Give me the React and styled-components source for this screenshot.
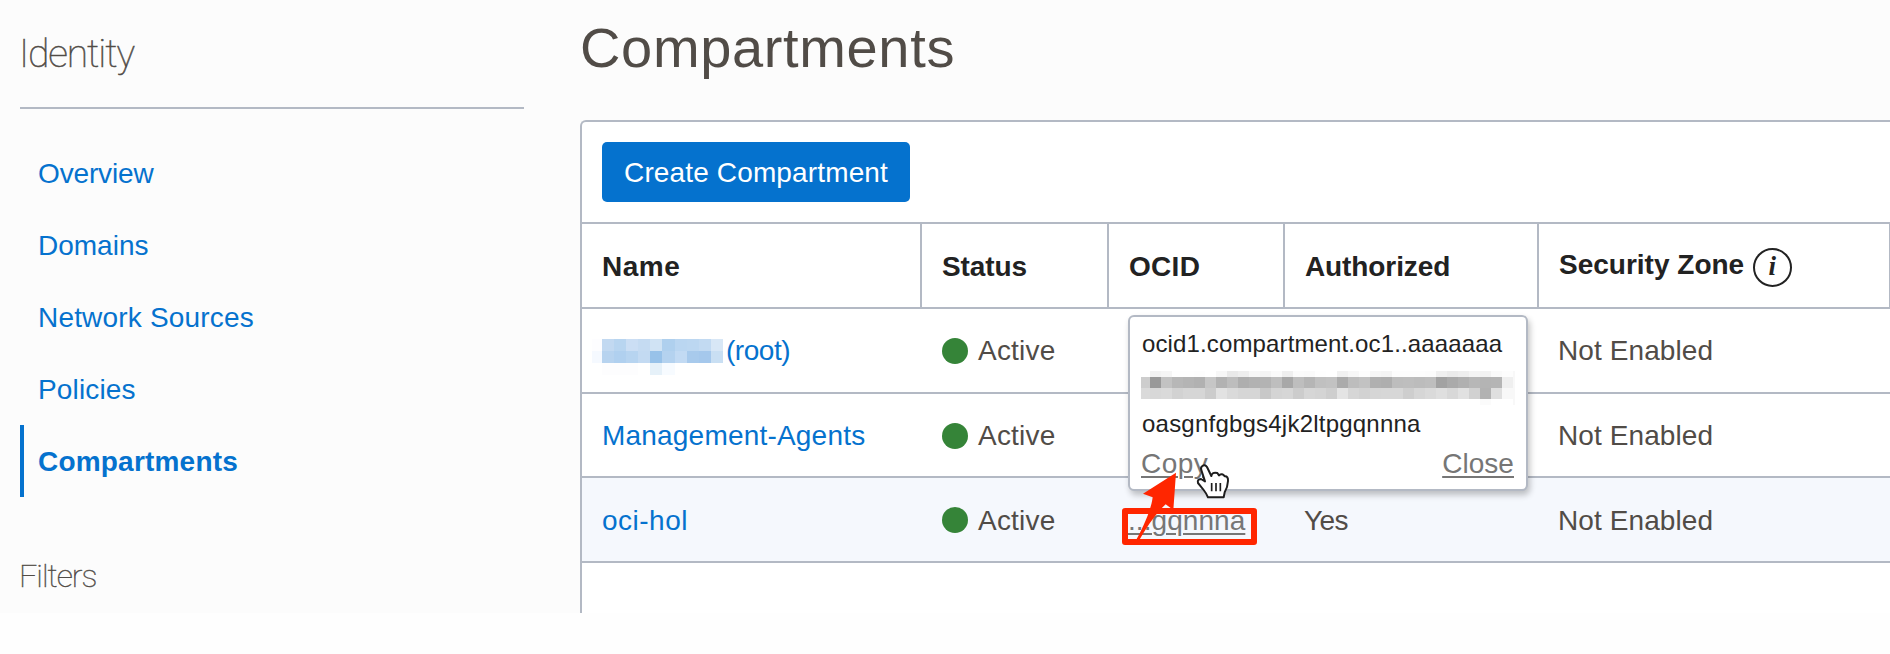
import React from 'react';
import styled, { createGlobalStyle } from 'styled-components';

const colors = {
  link: '#0572ce',
  text: '#514c47',
  heading: '#222222',
  muted: '#767676',
  line: '#b3b9c4',
  alert: '#ff2600',
};

const GlobalStyle = createGlobalStyle`
  body {
    margin: 0;
    background: #fefefe;
    color: ${colors.text};
    font-family: "Liberation Sans", Arial, sans-serif;
    font-size: 28px;
    overflow: hidden;
  }
  * { box-sizing: border-box; }
`;

const Frame = styled.div`
  display: grid;
  grid-template-columns: 580px 1fr;
  width: 1890px;
  height: 613px;
  background: #fcfcfc;
  overflow: hidden;
`;

/* ---------- Sidebar ---------- */

const Sidebar = styled.aside`
  padding: 0 56px 0 20px;
`;

const SidebarTitle = styled.h2`
  margin: 0;
  height: 109px;
  padding-top: 29px;
  border-bottom: 2px solid ${colors.line};
  font: 100 39px/50px Roboto, sans-serif;
  letter-spacing: -1.1px;
  text-indent: -1px;
  -webkit-text-stroke: 0.5px ${colors.text};
`;

const Nav = styled.nav`
  display: flex;
  flex-direction: column;
  padding-top: 28px;
`;

const NavItem = styled.a`
  height: 72px;
  padding-left: 14px;
  border-left: 4px solid ${(p) => (p.$active ? colors.link : 'transparent')};
  color: ${colors.link};
  font-weight: ${(p) => (p.$active ? 700 : 400)};
  letter-spacing: ${(p) => p.$tracking}px;
  line-height: 73px;
`;

const FiltersTitle = styled.h3`
  margin: 0;
  padding-top: 54px;
  font: 100 32px/50px Roboto, sans-serif;
  letter-spacing: -1px;
  text-indent: -1px;
  -webkit-text-stroke: 0.4px ${colors.text};
`;

/* ---------- Main column ---------- */

const Main = styled.main`
  min-width: 0;
`;

const PageTitle = styled.h1`
  margin: 0;
  height: 120px;
  padding-top: 16px;
  font-size: 56px;
  font-weight: 400;
  line-height: 64px;
  letter-spacing: 0.65px;
`;

const Panel = styled.section`
  height: 520px;
  border: 2px solid ${colors.line};
  border-right: 0;
  border-top-left-radius: 6px;
  background: #fff;
`;

const Toolbar = styled.div`
  height: 100px;
  padding: 20px;
`;

const PrimaryButton = styled.button`
  display: block;
  width: 308px;
  height: 60px;
  padding: 1px 0 0;
  border: 0;
  border-radius: 5px;
  background: ${colors.link};
  color: #fff;
  font: inherit;
  letter-spacing: 0.14px;
`;

const columns = '340px 187px 176px 254px 1fr';

const HeaderRow = styled.div`
  display: grid;
  grid-template-columns: ${columns};
  grid-template-rows: 83px;
  height: 87px;
  border-top: 2px solid ${colors.line};
  border-bottom: 2px solid ${colors.line};
`;

const HeaderCell = styled.div`
  padding: 2px 0 0 20px;
  border-right: ${(p) => (p.$last ? 1 : 2)}px solid ${colors.line};
  color: ${colors.heading};
  font-weight: 700;
  line-height: 81px;
  letter-spacing: ${(p) => p.$tracking || 0}px;
`;

const InfoHeaderCell = styled(HeaderCell)`
  display: flex;
  padding-top: 0;
`;

const InfoIcon = styled.span`
  width: 39px;
  height: 39px;
  margin: 24px 0 0 8.5px;
  border: 2px solid ${colors.heading};
  border-radius: 50%;
  font: italic 700 27px/33px "Liberation Serif", serif;
  text-align: center;
`;

const Row = styled.div`
  display: grid;
  grid-template-columns: ${columns};
  height: ${(p) => p.$height}px;
  border-bottom: 2px solid ${colors.line};
  background: ${(p) => (p.$selected ? '#f5f8fd' : '#fff')};
  line-height: ${(p) => (p.$selected ? 85 : 83)}px;
`;

const Cell = styled.div`
  display: flex;
  padding-left: ${(p) => (p.$flush ? 19 : 20)}px;
  letter-spacing: ${(p) => p.$tracking || 0}px;
  white-space: nowrap;
`;

const OcidCell = styled(Cell)`
  position: relative;
`;

const NameLink = styled.a`
  color: ${colors.link};
  letter-spacing: ${(p) => p.$tracking}px;
`;

const StatusDot = styled.span`
  width: 26px;
  height: 26px;
  margin: 29px 10px 0 0;
  border-radius: 50%;
  background: #358438;
`;

const TextLink = styled.a`
  color: ${colors.muted};
  letter-spacing: ${(p) => p.$tracking}px;
  text-decoration: underline;
  text-decoration-thickness: 2px;
  text-underline-offset: 3px;
`;

const OcidLink = styled(TextLink)`
  margin-left: -1px;
`;

/* ---------- Redacted text ---------- */

const MosaicGrid = styled.span`
  display: grid;
  grid-template-columns: ${(p) => p.$cols};
  grid-template-rows: ${(p) => p.$rows};
`;

const NameMosaic = styled(MosaicGrid)`
  margin: 24px 3px 0 -10px;
  align-self: flex-start;
`;

const OcidMosaic = styled(MosaicGrid)`
  height: 40px;
  padding-top: 7px;
`;

const Tile = styled.i`
  background: ${(p) => p.$fill};
`;

/* ---------- OCID popover ---------- */

const Popover = styled.div`
  position: absolute;
  z-index: 1;
  top: -163px;
  left: 19px;
  width: 400px;
  height: 176px;
  padding: 7px 11px 0;
  border: 2px solid ${colors.line};
  border-radius: 6px;
  background: #fff;
  box-shadow: 2px 4px 6px rgba(0, 0, 0, 0.24);
  line-height: 40px;
`;

const OcidLine = styled.div`
  height: 40px;
  padding-left: 1px;
  color: ${colors.heading};
  font-size: 24px;
  letter-spacing: ${(p) => p.$tracking}px;
`;

const PopoverActions = styled.div`
  display: flex;
  justify-content: space-between;
  padding-right: 1px;
`;

/* ---------- Callouts ---------- */

const Highlight = styled.span`
  position: absolute;
  z-index: 2;
  top: 30px;
  left: 13px;
  width: 135px;
  height: 37px;
  border: 6px solid ${colors.alert};
  border-radius: 3px;
`;

const Annotation = styled.svg`
  position: absolute;
  z-index: 3;
  top: -28px;
  left: 6px;
  width: 150px;
  height: 110px;
  overflow: visible;
`;

const nameTiles = [
  'f f f f f f f f f f f',
  '#fdfdff #c2d9f1 #b8d5f0 #cbdef4 #c5dbf2 #d0e3f4 #afd0ee #bad6f1 #bcd7f1 #c2daf2 #d8e7f6',
  '#f5f9ff #b7d3ef #b0d0ef #b7d4f0 #c3daf2 #98c2e9 #b4d2ef #c2daf3 #a8caec #a5c8ec #c9dff3',
  'f #fdfdfe #fdfdfe #fdfdfe f #e6f1f9 #f7fbff f f f f',
]
  .join(' ')
  .split(' ')
  .map((c) => (c === 'f' ? 'transparent' : c));

const ocidTiles = [
  'ff f2 f5 fe fe fd ff f7 e9 ee f7 f4 fa ef fb fa fe ff f1 f7 fd f6 f4 fd fd fd fc f0 eb ee f4 f2 fa fd f8',
  'cd 99 c2 b7 b4 b1 c6 b2 bd ae b2 b3 be a8 be b5 c0 c2 ab bd c2 b0 ae bd be bc be a2 aa b0 b7 b4 b5 ef f8',
  'da d8 da d2 d6 d6 cc e2 da d6 d6 c8 d4 d6 cc d6 d4 ce e4 d6 d2 d6 d7 d7 ce d6 da df d8 e1 d1 b2 df f8 f8',
  'ff ff ff ff ff ff ff ff ff ff ff ff ff ff ff ff ff ff ff ff ff ff ff ff ff ff ff ff ff ff ff fb ff ff f8',
]
  .join(' ')
  .split(' ')
  .map((v) => `#${v}${v}${v}`);

const navItems = [
  { label: 'Overview', tracking: -0.15 },
  { label: 'Domains', tracking: 0 },
  { label: 'Network Sources', tracking: 0.18 },
  { label: 'Policies', tracking: 0.15 },
  { label: 'Compartments', tracking: 0.2, active: true },
];

const rows = [
  { name: '(root)', tracking: -0.45, height: 85, redacted: true },
  { name: 'Management-Agents', tracking: 0.2, height: 84 },
  { name: 'oci-hol', tracking: 0.5, height: 85, open: true },
];

function OcidPopover() {
  return (
    <Popover>
      <OcidLine $tracking={0.13}>ocid1.compartment.oc1..aaaaaaa</OcidLine>
      <OcidMosaic $cols="9px repeat(33, 11px) 2px" $rows="6px 11px 11px 6px">
        {ocidTiles.map((fill, i) => (
          <Tile key={i} $fill={fill} />
        ))}
      </OcidMosaic>
      <OcidLine $tracking={0.22}>oasgnfgbgs4jk2ltpgqnnna</OcidLine>
      <PopoverActions>
        <TextLink $tracking={0.45}>Copy</TextLink>
        <TextLink $tracking={0.05}>Close</TextLink>
      </PopoverActions>
    </Popover>
  );
}

function ArrowAndPointer() {
  return (
    <Annotation viewBox="0 0 450 330">
      <path
        d="M183 68 L84 131 L113 142 C108 182 84 232 59 279 Q64 286 69 277 C94 232 120 193 152 163 L175 180 Z"
        fill={colors.alert}
      />
      <path
        d="M262 48 Q270 42 276 51 L289 78 Q291 65 307 69 L312 76 Q322 68 329 79 Q340 78 339 93 Q338 112 329 127 L326 142 L279 142 Q274 130 266 120 L249 99 Q246 88 258 87 L270 94 L259 60 Q256 52 262 48 Z"
        fill="#fff"
        stroke="#1d1d1d"
        strokeWidth="6"
        strokeLinejoin="round"
      />
      <path d="M290 99 V124 M303 99 V124 M316 99 V124" stroke="#1d1d1d" strokeWidth="5" fill="none" />
    </Annotation>
  );
}

export default function App() {
  return (
    <>
      <GlobalStyle />
      <Frame>
        <Sidebar>
          <SidebarTitle>Identity</SidebarTitle>
          <Nav>
            {navItems.map((item) => (
              <NavItem key={item.label} $active={item.active} $tracking={item.tracking}>
                {item.label}
              </NavItem>
            ))}
          </Nav>
          <FiltersTitle>Filters</FiltersTitle>
        </Sidebar>
        <Main>
          <PageTitle>Compartments</PageTitle>
          <Panel>
            <Toolbar>
              <PrimaryButton>Create Compartment</PrimaryButton>
            </Toolbar>
            <HeaderRow>
              <HeaderCell $tracking={0.5}>Name</HeaderCell>
              <HeaderCell $tracking={-0.1}>Status</HeaderCell>
              <HeaderCell $tracking={0.3}>OCID</HeaderCell>
              <HeaderCell $tracking={-0.1}>Authorized</HeaderCell>
              <InfoHeaderCell $last>
                Security Zone
                <InfoIcon>i</InfoIcon>
              </InfoHeaderCell>
            </HeaderRow>
            {rows.map((row) => (
              <Row key={row.name} $height={row.height} $selected={row.open}>
                <Cell>
                  {row.redacted && (
                    <NameMosaic $cols="10px repeat(10, 12.1px)" $rows="6px 12px 12px 12px">
                      {nameTiles.map((fill, i) => (
                        <Tile key={i} $fill={fill} />
                      ))}
                    </NameMosaic>
                  )}
                  <NameLink $tracking={row.tracking}>{row.name}</NameLink>
                </Cell>
                <Cell $tracking={0.22}>
                  <StatusDot />
                  Active
                </Cell>
                <OcidCell>
                  {row.open && (
                    <>
                      <OcidLink $tracking={0.06}>...gqnnna</OcidLink>
                      <Highlight />
                      <OcidPopover />
                      <ArrowAndPointer />
                    </>
                  )}
                </OcidCell>
                <Cell $flush $tracking={-0.6}>{row.open && 'Yes'}</Cell>
                <Cell $flush $tracking={0.1}>Not Enabled</Cell>
              </Row>
            ))}
          </Panel>
        </Main>
      </Frame>
    </>
  );
}
